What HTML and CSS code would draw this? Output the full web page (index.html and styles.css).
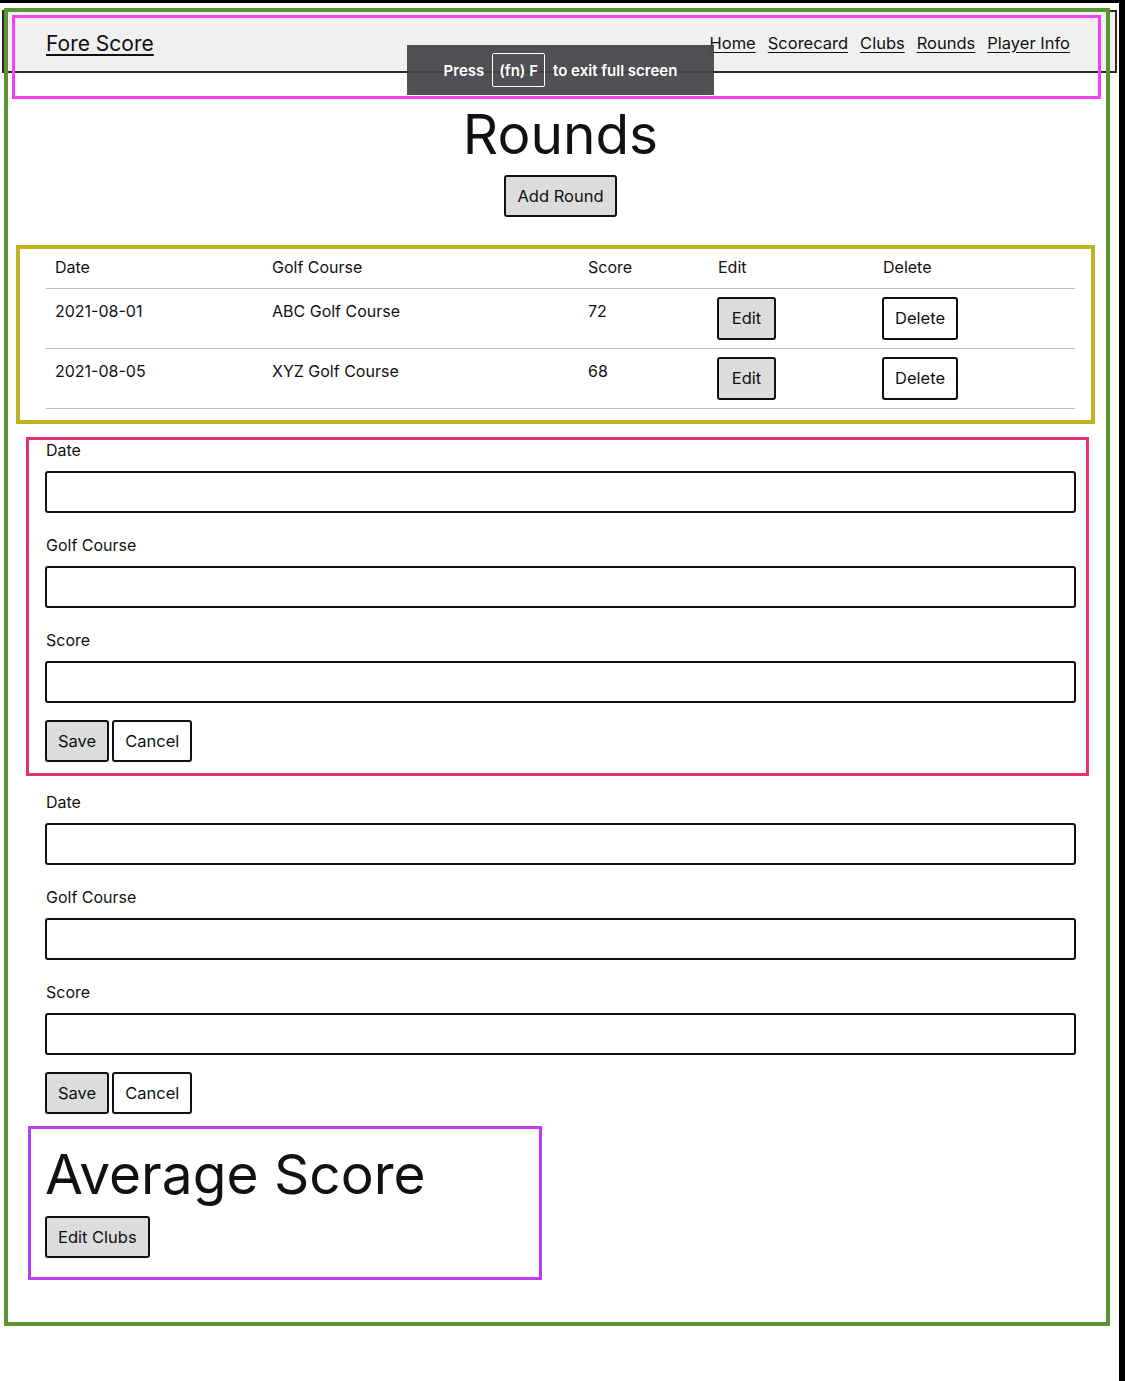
FILE: index.html
```html
<!DOCTYPE html>
<html lang="en">
<head>
<meta charset="utf-8">
<title>Fore Score - Rounds</title>
<link rel="stylesheet" href="styles.css">
</head>
<body>
<div class="window">
  <div class="frame">
    <header class="header">
      <nav class="nav">
        <a class="brand" href="#">Fore Score</a>
        <div class="links">
          <a href="#">Home</a>
          <a href="#">Scorecard</a>
          <a href="#">Clubs</a>
          <a href="#">Rounds</a>
          <a href="#">Player Info</a>
        </div>
      </nav>
    </header>
    <main class="content">
      <h1 class="title">Rounds</h1>
      <div class="center"><button class="btn btn-grey" type="button">Add Round</button></div>

      <section class="box box-yellow">
        <table class="rounds">
          <colgroup>
            <col class="c-date"><col class="c-course"><col class="c-score"><col class="c-edit"><col class="c-del">
          </colgroup>
          <thead>
            <tr><th>Date</th><th>Golf Course</th><th>Score</th><th>Edit</th><th>Delete</th></tr>
          </thead>
          <tbody>
            <tr>
              <td>2021-08-01</td><td>ABC Golf Course</td><td>72</td>
              <td class="act"><button class="btn btn-grey btn-row btn-edit" type="button">Edit</button></td>
              <td class="act"><button class="btn btn-row" type="button">Delete</button></td>
            </tr>
            <tr>
              <td>2021-08-05</td><td>XYZ Golf Course</td><td>68</td>
              <td class="act"><button class="btn btn-grey btn-row btn-edit" type="button">Edit</button></td>
              <td class="act"><button class="btn btn-row" type="button">Delete</button></td>
            </tr>
          </tbody>
        </table>
      </section>

      <form class="form box box-pink">
        <div class="field"><label>Date</label><input type="text"></div>
        <div class="field"><label>Golf Course</label><input type="text"></div>
        <div class="field"><label>Score</label><input type="text"></div>
        <div class="actions">
          <button class="btn btn-grey" type="button">Save</button>
          <button class="btn" type="button">Cancel</button>
        </div>
      </form>

      <form class="form form-plain">
        <div class="field"><label>Date</label><input type="text"></div>
        <div class="field"><label>Golf Course</label><input type="text"></div>
        <div class="field"><label>Score</label><input type="text"></div>
        <div class="actions">
          <button class="btn btn-grey" type="button">Save</button>
          <button class="btn" type="button">Cancel</button>
        </div>
      </form>

      <section class="box box-purple">
        <h2 class="avg-title">Average Score</h2>
        <div class="avg-actions"><button class="btn btn-grey" type="button">Edit Clubs</button></div>
      </section>
    </main>
  </div>
  <div class="toast">Press <span class="key">(fn) F</span> to exit full screen</div>
</div>
</body>
</html>
```

FILE: styles.css
```css
html, body {
  margin: 0;
  padding: 0;
  background: #fff;
}

body {
  font-family: Inter, "Noto Sans", "Liberation Sans", sans-serif;
  color: #111;
}

.window {
  position: relative;
  width: 1125px;
  height: 1381px;
  box-sizing: border-box;
  border-top: 3px solid #000;
  border-right: 6px solid #000;
  overflow: hidden;
}

.frame {
  position: relative;
  margin: 5px 0 0 4px;
  width: 1106px;
  box-sizing: border-box;
  padding: 0 0 46px;
}

.frame::after {
  content: "";
  position: absolute;
  inset: 0;
  border: 4px solid #5b9232;
  pointer-events: none;
  z-index: 3;
}

/* header / nav */
.header {
  position: relative;
  height: 91px;
  box-sizing: border-box;
  padding-top: 2px;
}

.header::after {
  content: "";
  position: absolute;
  left: 8px;
  top: 7px;
  width: 1089px;
  height: 84px;
  box-sizing: border-box;
  border: 3px solid #f640f4;
  pointer-events: none;
  z-index: 4;
}

.nav {
  margin-left: -2px;
  width: 1115px;
  height: 63px;
  box-sizing: border-box;
  border: 2px solid #2a2a2a;
  background: #f0f0f0;
  display: flex;
  align-items: center;
  justify-content: space-between;
  padding: 3px 45px 0 42px;
}

.brand {
  font-size: 21px;
  color: #111;
  text-decoration: underline;
  text-underline-offset: 3px;
}

.links {
  display: flex;
  gap: 12px;
  margin-top: -1px;
}

.links a {
  font-size: 16.5px;
  color: #111;
  text-decoration: underline;
  text-underline-offset: 3px;
}

/* content */
.content {
  padding: 0 34px 0 41px;
}

.title {
  margin: 0;
  font-size: 55px;
  line-height: 70px;
  font-weight: 400;
  text-align: center;
}

.center {
  display: flex;
  justify-content: center;
  margin-top: 6px;
}

.btn {
  height: 42px;
  box-sizing: border-box;
  padding: 0 11px;
  border: 2px solid #111;
  border-radius: 3px;
  background: #fff;
  color: #111;
  font-family: Inter, "Noto Sans", sans-serif;
  font-size: 16.5px;
  line-height: 1;
}

.btn-grey {
  background: #dcdcdc;
}

.btn-row {
  height: 43px;
}

.btn-edit {
  min-width: 59px;
}

/* annotation-style boxes */
.box-yellow {
  margin: 28px -19px 0 -29px;
  border: 4px solid #bfb323;
  padding: 0 16px 11px 26px;
}

.rounds {
  width: 100%;
  border-collapse: collapse;
  table-layout: fixed;
  font-size: 16px;
}

.c-date { width: 217px; }
.c-course { width: 316px; }
.c-score { width: 130px; }
.c-edit { width: 165px; }
.c-del { width: 201px; }

.rounds th {
  text-align: left;
  font-weight: 400;
  line-height: 20px;
  padding: 8px 9px 11px;
  border-bottom: 1px solid #bdbdbd;
}

.rounds td {
  vertical-align: top;
  line-height: 20px;
  padding: 12px 9px;
  border-bottom: 1px solid #bdbdbd;
}

.rounds td.act {
  padding: 8px 9px 8px 8px;
}

.form {
  margin: 0;
}

.box-pink {
  margin: 13px -13px 0 -19px;
  border: 3px solid #e6336f;
  padding: 0 10px 11px 16px;
}

.form-plain {
  margin-top: 16px;
}

.field {
  margin-bottom: 22px;
}

.field label {
  display: block;
  font-size: 16px;
  line-height: 20px;
  margin-bottom: 11px;
  padding-left: 1px;
}

.field input {
  display: block;
  width: 100%;
  height: 42px;
  box-sizing: border-box;
  border: 2px solid #111;
  border-radius: 3px;
  background: #fff;
  margin: 0;
}

.actions {
  display: flex;
  gap: 3px;
  margin-top: -5px;
}

.box-purple {
  margin: 12px 0 0 -17px;
  width: 514px;
  box-sizing: border-box;
  border: 3px solid #bb3ef0;
  padding: 10px 14px 19px;
}

.avg-title {
  margin: 0;
  font-size: 55px;
  line-height: 70px;
  font-weight: 400;
}

.avg-actions {
  display: flex;
  margin-top: 7px;
}

/* full-screen toast overlay */
.toast {
  position: absolute;
  left: 407px;
  top: 42px;
  width: 307px;
  height: 50px;
  display: flex;
  align-items: center;
  justify-content: center;
  gap: 8px;
  background: rgba(68, 68, 72, 0.93);
  color: #fff;
  font-size: 15px;
  font-weight: 600;
  z-index: 10;
}

.key {
  display: flex;
  align-items: center;
  height: 34px;
  box-sizing: border-box;
  padding: 0 6px;
  border: 1px solid #fff;
  border-radius: 2px;
}
```
